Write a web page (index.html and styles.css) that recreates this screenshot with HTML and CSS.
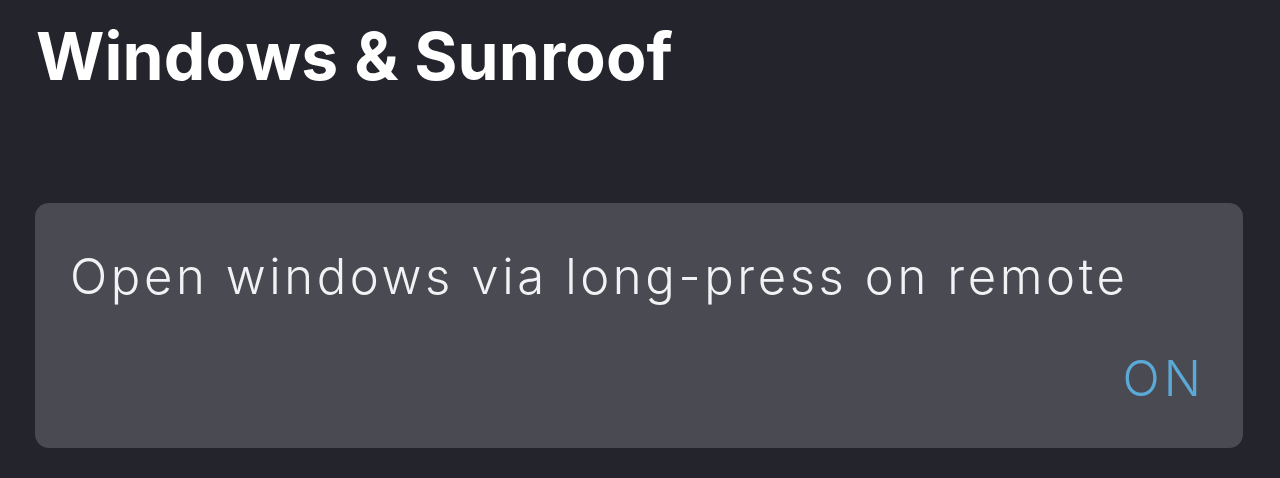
FILE: index.html
```html
<!DOCTYPE html>
<html>
<head>
<meta charset="utf-8">
<link rel="stylesheet" href="styles.css">
</head>
<body>
<div class="page">
  <h1 class="title">Windows &amp; Sunroof</h1>
  <div class="card">
    <div class="label">Open windows via long-press on remote</div>
    <div class="value">ON</div>
  </div>
</div>
</body>
</html>
```
FILE: styles.css
```css
html, body {
  margin: 0;
  padding: 0;
  background: #24242d;
  width: 1280px;
  height: 478px;
  overflow: hidden;
}
.page {
  padding: 0 37px 0 35px;
  font-family: Inter, "DejaVu Sans", sans-serif;
  display: flex;
  flex-direction: column;
}
.title {
  margin: 18px 0 0 1px;
  font-size: 66px;
  line-height: 76px;
  font-weight: 700;
  color: #ffffff;
  letter-spacing: 0.1px;
}
.card {
  margin-top: 109px;
  height: 245px;
  box-sizing: border-box;
  background: #4a4a53;
  border-radius: 14px;
  padding: 46px 38px 0 35px;
  display: flex;
  flex-direction: column;
}
.label {
  font-size: 49px;
  line-height: 56px;
  color: #f2f2f4;
  font-weight: 300;
  letter-spacing: 3.6px;
}
.value {
  margin-top: 46px;
  align-self: flex-end;
  font-size: 49px;
  line-height: 56px;
  color: #5aa9d6;
  font-weight: 300;
  letter-spacing: 4px;
}
```
